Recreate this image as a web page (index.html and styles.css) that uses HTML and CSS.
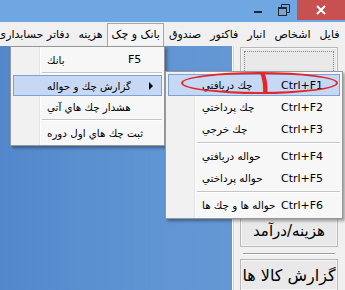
FILE: index.html
```html
<!DOCTYPE html>
<html lang="fa">
<head>
<meta charset="utf-8">
<link rel="stylesheet" href="styles.css">
</head>
<body>
<div class="window">
  <div class="titlebar">
    <div class="caption">
      <div class="cb cb-min"><svg width="10" height="10" viewBox="0 0 10 10"><rect x="1" y="6" width="8" height="2" fill="#262626"/></svg></div>
      <div class="cb cb-max"><svg width="12" height="12" viewBox="0 0 12 12"><path d="M3.5 3.5V0.5H11.5V8.5H8.5" fill="none" stroke="#262626"/><rect x="0.5" y="3.5" width="8" height="8" fill="none" stroke="#262626"/><rect x="1" y="4" width="7" height="1" fill="#262626"/></svg></div>
      <div class="cb cb-close"><svg width="12" height="12" viewBox="0 0 12 12"><path d="M2 2L10 10M10 2L2 10" stroke="#fff" stroke-width="2"/></svg></div>
    </div>
  </div>
  <div class="menubar" dir="rtl">
    <span class="mb-item">فایل</span>
    <span class="mb-item">اشخاص</span>
    <span class="mb-item">انبار</span>
    <span class="mb-item">فاکتور</span>
    <span class="mb-item">صندوق</span>
    <span class="mb-item mb-open">بانک و چک</span>
    <span class="mb-item">هزینه</span>
    <span class="mb-item">دفاتر حسابداری</span>
  </div>
  <div class="client">
    <div class="mdi"></div>
    <div class="panel">
      <div class="pbtn pbtn-focus"><div class="focusrect"></div></div>
      <div class="pbtn pbtn-hidden"></div>
      <div class="pbtn pbtn-hidden"></div>
      <div class="pbtn pbtn-hidden"></div>
      <div class="pbtn pbtn-text">هزینه/درآمد</div>
      <div class="psep"></div>
      <div class="pbtn pbtn-text pbtn-big">گزارش کالا ها</div>
    </div>
  </div>

  <div class="menu dropdown">
    <div class="mrow"><span class="gut"></span><span class="lbl">بانك</span><span class="key">F5</span><span class="arr"></span></div>
    <div class="msep"></div>
    <div class="mrow hot"><span class="gut"></span><span class="lbl">گزارش چك و حواله</span><span class="key"></span><span class="arr"><svg width="5" height="8" viewBox="0 0 5 8"><path d="M0 0L4 4L0 8Z" fill="#000"/></svg></span></div>
    <div class="mrow"><span class="gut"></span><span class="lbl">هشدار چك هاي آتي</span><span class="key"></span><span class="arr"></span></div>
    <div class="msep"></div>
    <div class="mrow"><span class="gut"></span><span class="lbl">ثبت چك هاي اول دوره</span><span class="key"></span><span class="arr"></span></div>
  </div>

  <div class="menu submenu">
    <div class="mrow hot"><span class="gut"></span><span class="lbl">چك دريافتي</span><span class="key">Ctrl+F1</span></div>
    <div class="mrow"><span class="gut"></span><span class="lbl">چك پرداختي</span><span class="key">Ctrl+F2</span></div>
    <div class="mrow"><span class="gut"></span><span class="lbl">چك خرجي</span><span class="key">Ctrl+F3</span></div>
    <div class="msep"></div>
    <div class="mrow"><span class="gut"></span><span class="lbl">حواله دريافتي</span><span class="key">Ctrl+F4</span></div>
    <div class="mrow"><span class="gut"></span><span class="lbl">حواله پرداختي</span><span class="key">Ctrl+F5</span></div>
    <div class="msep"></div>
    <div class="mrow"><span class="gut"></span><span class="lbl">حواله ها و چك ها</span><span class="key">Ctrl+F6</span></div>
  </div>

  <div class="annot-ellipse"></div>
  <div class="annot-one">۱</div>
</div>
</body>
</html>
```

FILE: styles.css
```css
* { box-sizing: border-box; }
html, body { margin: 0; padding: 0; }
body {
  width: 345px;
  height: 290px;
  overflow: hidden;
  font-family: "DejaVu Sans", sans-serif;
  font-size: 11px;
  color: #000;
}
.window {
  position: relative;
  width: 345px;
  height: 290px;
  display: flex;
  flex-direction: column;
  overflow: hidden;
}
.titlebar {
  height: 22px;
  flex: none;
  background: #6ea7e2;
  display: flex;
  justify-content: flex-end;
}
.caption { display: flex; height: 20px; }
.cb {
  display: flex;
  align-items: center;
  justify-content: center;
  height: 20px;
}
.cb-min { width: 26px; }
.cb-max { width: 26px; }
.cb-close { width: 48px; background: #c75050; }

.menubar {
  height: 24px;
  flex: none;
  background: #f0f0f0;
  display: flex;
  align-items: center;
  padding-right: 1px;
  overflow: hidden;
  white-space: nowrap;
  font-size: 11px;
}
.mb-item {
  flex: none;
  padding: 0 3.5px;
  height: 22px;
  line-height: 21px;
  border: 1px solid transparent;
}
.mb-open {
  border-color: #a6a6a6;
  background: #f5f5f5;
  height: 23px;
  margin-top: 1px;
  border-bottom: none;
}

.client {
  flex: 1;
  display: flex;
}
.mdi {
  flex: 1;
  background: linear-gradient(90deg, #5288cb 0%, #5f94d3 60%, #6497d4 100%);
}
.panel {
  width: 113px;
  flex: none;
  background: #f0f0f0;
  border-left: 1px solid #fdfdfd;
  box-shadow: inset 1px 0 0 #d6d6d6;
  padding: 1px 7px 0 7px;
  display: flex;
  flex-direction: column;
  gap: 4px;
}
.pbtn {
  height: 38px;
  flex: none;
  background: #e9e9e9;
  border: 1px solid #b9b9b9;
  box-shadow: inset 0 0 0 1px #f6f6f6;
  display: flex;
  align-items: center;
  justify-content: center;
  font-size: 15px;
  white-space: nowrap;
}
.pbtn-focus { padding: 3px; align-items: stretch; }
.focusrect { flex: 1; border: 1px dotted #8a8a8a; }
.pbtn-text { height: 32px; }
.pbtn-big { font-size: 16px; }
.psep {
  height: 2px;
  flex: none;
  margin: 2px 3px 0;
  border-top: 1px solid #a0a0a0;
  border-bottom: 1px solid #fff;
}

/* popup menus */
.menu {
  position: absolute;
  border: 1px solid #979797;
  box-shadow: 2px 2px 3px rgba(0, 0, 0, 0.35);
  padding: 2px;
  background-image: linear-gradient(90deg, #f1f1f1 0, #f1f1f1 28px, #e2e3e3 28px, #e2e3e3 29px, #fff 29px, #fff 30px, transparent 30px);
  background-color: #f7f7f7;
}
.dropdown { left: 10px; top: 46px; width: 155px; }
.submenu { left: 165px; top: 71px; width: 178px; }
.mrow {
  display: flex;
  align-items: center;
  height: 21px;
  border: 1px solid transparent;
  white-space: nowrap;
}
.submenu .mrow { height: 22px; }
.mrow.hot {
  background: #c6d8f3;
  border-color: #7da2d9;
}
.gut { width: 28px; flex: none; }
.lbl { flex: 1; min-width: 0; padding-left: 5px; text-align: left; font-size: 10.3px; }
.key { flex: none; width: 21px; font-size: 11px; }
.submenu .key { width: 58px; }
.arr { flex: none; width: 12px; display: flex; align-items: center; }
.msep {
  height: 5px;
  margin-left: 29px;
  border-top: 2px solid transparent;
}
.msep::after {
  content: "";
  display: block;
  height: 1px;
  background: #c5c5c5;
  box-shadow: 0 1px 0 #fff;
}

/* annotation */
.annot-ellipse {
  position: absolute;
  left: 181px;
  top: 72px;
  width: 157px;
  height: 22px;
  border: 2px solid #e3262a;
  border-radius: 50%;
}
.annot-one {
  position: absolute;
  left: 256px;
  top: 66px;
  font-size: 28px;
  font-weight: bold;
  color: #e3262a;
  line-height: 30px;
  transform: scale(0.9, 1.13);
  transform-origin: 50% 0;
}
```
